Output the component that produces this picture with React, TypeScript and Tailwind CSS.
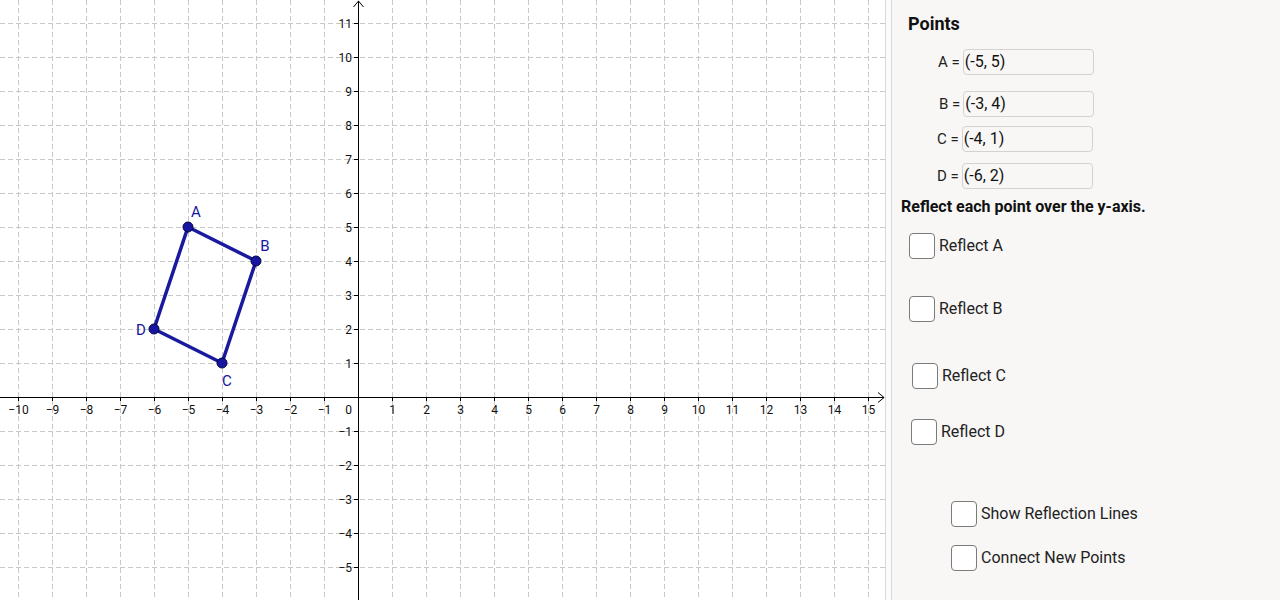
import React from "react";

const UNIT = 34;
const OX = 358;
const OY = 397;
const W = 885;
const H = 600;

const px = (x: number) => OX + x * UNIT;
const py = (y: number) => OY - y * UNIT;

const points = [
  { name: "A", x: -5, y: 5, lx: 196, ly: 217 },
  { name: "B", x: -3, y: 4, lx: 265, ly: 251 },
  { name: "C", x: -4, y: 1, lx: 227, ly: 386 },
  { name: "D", x: -6, y: 2, lx: 141, ly: 335 },
];

const minus = (n: number) => (n < 0 ? `\u2212${Math.abs(n)}` : `${n}`);

function Graph() {
  const xs = Array.from({ length: 26 }, (_, i) => i - 10);
  const ys = Array.from({ length: 17 }, (_, i) => i - 5);
  const poly = points.map((p) => `${px(p.x)},${py(p.y)}`).join(" ");

  return (
    <svg width={W} height={H} className="block shrink-0 bg-white" style={{ fontFamily: "Roboto, 'Liberation Sans', sans-serif" }}>
      {/* grid */}
      {xs.map((x) => (
        <line key={`gx${x}`} x1={px(x) + 0.5} x2={px(x) + 0.5} y1={0} y2={H} stroke="#c8c8c8" strokeDasharray="5 3" />
      ))}
      {ys.map((y) => (
        <line key={`gy${y}`} x1={0} x2={W} y1={py(y) + 0.5} y2={py(y) + 0.5} stroke="#c8c8c8" strokeDasharray="5 3" />
      ))}

      {/* axes */}
      <line x1={0} x2={W - 1} y1={OY + 0.5} y2={OY + 0.5} stroke="#000" />
      <polyline points={`${W - 7},${OY - 4.5} ${W - 1},${OY + 0.5} ${W - 7},${OY + 5.5}`} fill="none" stroke="#000" />
      <line x1={OX + 0.5} x2={OX + 0.5} y1={1} y2={H} stroke="#000" />
      <polyline points={`${OX - 4.5},${7} ${OX + 0.5},${1} ${OX + 5.5},${7}`} fill="none" stroke="#000" />

      {/* ticks + labels */}
      {xs.filter((x) => x !== 0).map((x) => (
        <g key={`tx${x}`}>
          <line x1={px(x) + 0.5} x2={px(x) + 0.5} y1={OY} y2={OY + 4} stroke="#000" />
          <text x={px(x) + 0.5} y={OY + 17} textAnchor="middle" fontSize={12} fill="#111">
            {minus(x)}
          </text>
        </g>
      ))}
      {ys.filter((y) => y !== 0).map((y) => (
        <g key={`ty${y}`}>
          <line x1={OX - 4} x2={OX} y1={py(y) + 0.5} y2={py(y) + 0.5} stroke="#000" />
          <text x={OX - 6} y={py(y) + 4.5} textAnchor="end" fontSize={12} fill="#111">
            {minus(y)}
          </text>
        </g>
      ))}
      <text x={OX - 6} y={OY + 17} textAnchor="end" fontSize={12} fill="#111">
        0
      </text>

      {/* quadrilateral */}
      <polygon points={poly} fill="none" stroke="#1a1a9e" strokeWidth={3.5} strokeLinejoin="round" />
      {points.map((p) => (
        <g key={p.name}>
          <circle cx={px(p.x)} cy={py(p.y)} r={5} fill="#1616a0" stroke="#050540" strokeWidth={1} />
          <text x={p.lx} y={p.ly} textAnchor="middle" fontSize={15} fill="#1616a0">
            {p.name}
          </text>
        </g>
      ))}
    </svg>
  );
}

function PointField({ label, value, className }: { label: string; value: string; className: string }) {
  return (
    <div className={`flex items-center ${className}`}>
      <span className="text-[15px] text-[#222] pr-[3px]">{label} =</span>
      <div className="h-[26px] w-[131px] rounded-[4px] border border-[#d2d2d2] bg-[#f8f7f6] px-px flex items-center text-[16px] text-[#111]">
        {value}
      </div>
    </div>
  );
}

function Check({ label, className }: { label: string; className: string }) {
  return (
    <label className={`flex items-center gap-[4px] ${className}`}>
      <span className="h-[26px] w-[26px] rounded-[4px] border-[1.5px] border-[#7b7b7b] bg-white" />
      <span className="text-[16px] text-[#222]">{label}</span>
    </label>
  );
}

export default function App() {
  return (
    <div className="flex h-[600px] w-[1280px] overflow-hidden bg-white" style={{ fontFamily: "Roboto, 'Liberation Sans', sans-serif" }}>
      <Graph />
      <div className="w-[7px] shrink-0 border-x border-[#dadada] bg-[#fbfbfb]" />
      <div className="flex flex-1 flex-col bg-[#f8f7f6]">
        <div className="mt-[12px] ml-[16px] h-[24px] leading-[24px] text-[18px] font-bold text-[#111]">Points</div>
        <PointField label="A" value="(-5, 5)" className="mt-[13px] ml-[46px]" />
        <PointField label="B" value="(-3, 4)" className="mt-[16px] ml-[47px]" />
        <PointField label="C" value="(-4, 1)" className="mt-[9px] ml-[45px]" />
        <PointField label="D" value="(-6, 2)" className="mt-[11px] ml-[45px]" />
        <div className="mt-[8px] ml-[9px] h-[20px] leading-[20px] text-[16px] font-bold text-[#111]">
          Reflect each point over the y-axis.
        </div>
        <Check label="Reflect A" className="mt-[16px] ml-[17px]" />
        <Check label="Reflect B" className="mt-[37px] ml-[17px]" />
        <Check label="Reflect C" className="mt-[41px] ml-[20px]" />
        <Check label="Reflect D" className="mt-[30px] ml-[19px]" />
        <Check label="Show Reflection Lines" className="mt-[56px] ml-[59px]" />
        <Check label="Connect New Points" className="mt-[18px] ml-[59px]" />
      </div>
    </div>
  );
}
